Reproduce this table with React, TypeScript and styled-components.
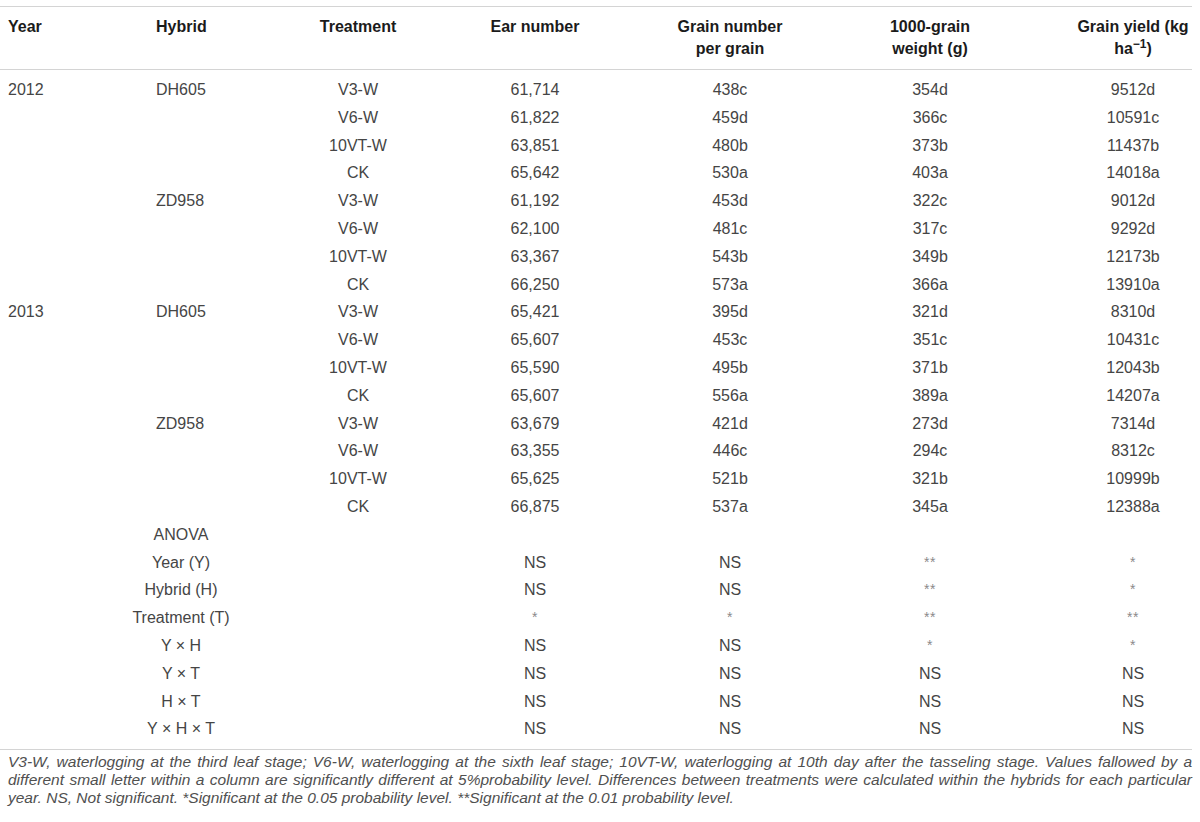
import React from 'react';
import styled, { createGlobalStyle } from 'styled-components';

const Global = createGlobalStyle`
  html, body { margin: 0; padding: 0; background: #ffffff; }
  body { font-family: "Liberation Sans", Arial, Helvetica, sans-serif; }
`;

const COLS = '156px 164px 76px 278px 112px 288px 118px';
const RULE = '#d4d4d4';

const Page = styled.div`
  width: 1192px;
  padding-top: 6px;
`;

const Head = styled.div`
  display: grid;
  grid-template-columns: ${COLS};
  align-items: start;
  border-top: 1px solid ${RULE};
  border-bottom: 1px solid ${RULE};
  padding: 9px 0 10px;
  font-size: 16px;
  font-weight: 700;
  line-height: 21.5px;
  color: #1b1b1b;
`;

const HeadCell = styled.div<{ $start?: boolean; $inset?: number }>`
  display: flex;
  flex-direction: column;
  align-items: ${(p) => (p.$start ? 'flex-start' : 'center')};
  padding-left: ${(p) => p.$inset ?? 0}px;
  white-space: nowrap;
`;

const Sup = styled.sup`
  font-size: 12px;
  line-height: 0;
  vertical-align: 6px;
`;

const Body = styled.div`
  padding: 6px 0;
  border-bottom: 1px solid ${RULE};
  font-size: 16px;
  line-height: 27.8px;
  color: #454545;
`;

const Row = styled.div`
  display: grid;
  grid-template-columns: ${COLS};
  height: 27.8px;
`;

const Cell = styled.div<{ $start?: boolean; $inset?: number }>`
  display: flex;
  justify-content: ${(p) => (p.$start ? 'flex-start' : 'center')};
  padding-left: ${(p) => p.$inset ?? 0}px;
  white-space: nowrap;
`;

const AnovaLabel = styled.span`
  width: 50px;
  display: flex;
  justify-content: center;
  white-space: nowrap;
`;

const Star = styled.span`
  color: #8a8a8a;
  font-size: 14px;
  letter-spacing: 0.5px;
`;

const Note = styled.div`
  padding: 3px 0 0 8px;
  font-size: 15.5px;
  font-style: italic;
  line-height: 18px;
  color: #505050;
`;

const NoteLine = styled.span<{ $last?: boolean }>`
  display: block;
  text-align: justify;
  text-align-last: ${(p) => (p.$last ? 'left' : 'justify')};
  white-space: nowrap;
`;

type DataRow = {
  year?: string;
  hybrid?: string;
  treatment: string;
  values: string[];
};

const data: DataRow[] = [
  { year: '2012', hybrid: 'DH605', treatment: 'V3-W', values: ['61,714', '438c', '354d', '9512d'] },
  { treatment: 'V6-W', values: ['61,822', '459d', '366c', '10591c'] },
  { treatment: '10VT-W', values: ['63,851', '480b', '373b', '11437b'] },
  { treatment: 'CK', values: ['65,642', '530a', '403a', '14018a'] },
  { hybrid: 'ZD958', treatment: 'V3-W', values: ['61,192', '453d', '322c', '9012d'] },
  { treatment: 'V6-W', values: ['62,100', '481c', '317c', '9292d'] },
  { treatment: '10VT-W', values: ['63,367', '543b', '349b', '12173b'] },
  { treatment: 'CK', values: ['66,250', '573a', '366a', '13910a'] },
  { year: '2013', hybrid: 'DH605', treatment: 'V3-W', values: ['65,421', '395d', '321d', '8310d'] },
  { treatment: 'V6-W', values: ['65,607', '453c', '351c', '10431c'] },
  { treatment: '10VT-W', values: ['65,590', '495b', '371b', '12043b'] },
  { treatment: 'CK', values: ['65,607', '556a', '389a', '14207a'] },
  { hybrid: 'ZD958', treatment: 'V3-W', values: ['63,679', '421d', '273d', '7314d'] },
  { treatment: 'V6-W', values: ['63,355', '446c', '294c', '8312c'] },
  { treatment: '10VT-W', values: ['65,625', '521b', '321b', '10999b'] },
  { treatment: 'CK', values: ['66,875', '537a', '345a', '12388a'] },
];

const anova: { label: string; values: string[] }[] = [
  { label: 'ANOVA', values: ['', '', '', ''] },
  { label: 'Year (Y)', values: ['NS', 'NS', '**', '*'] },
  { label: 'Hybrid (H)', values: ['NS', 'NS', '**', '*'] },
  { label: 'Treatment (T)', values: ['*', '*', '**', '**'] },
  { label: 'Y × H', values: ['NS', 'NS', '*', '*'] },
  { label: 'Y × T', values: ['NS', 'NS', 'NS', 'NS'] },
  { label: 'H × T', values: ['NS', 'NS', 'NS', 'NS'] },
  { label: 'Y × H × T', values: ['NS', 'NS', 'NS', 'NS'] },
];

const Value = ({ v }: { v: string }) =>
  v.startsWith('*') ? <Star>{v}</Star> : <>{v}</>;

export default function App() {
  return (
    <Page>
      <Global />
      <Head>
        <HeadCell $start $inset={8}>Year</HeadCell>
        <HeadCell $start>Hybrid</HeadCell>
        <HeadCell>Treatment</HeadCell>
        <HeadCell>Ear number</HeadCell>
        <HeadCell>
          <span>Grain number</span>
          <span>per grain</span>
        </HeadCell>
        <HeadCell>
          <span>1000-grain</span>
          <span>weight (g)</span>
        </HeadCell>
        <HeadCell>
          <span>Grain yield (kg</span>
          <span>
            ha<Sup>−1</Sup>)
          </span>
        </HeadCell>
      </Head>
      <Body>
        {data.map((r, i) => (
          <Row key={i}>
            <Cell $start $inset={8}>{r.year ?? ''}</Cell>
            <Cell $start>{r.hybrid ?? ''}</Cell>
            <Cell>{r.treatment}</Cell>
            {r.values.map((v, j) => (
              <Cell key={j}>{v}</Cell>
            ))}
          </Row>
        ))}
        {anova.map((r, i) => (
          <Row key={`a${i}`}>
            <Cell />
            <Cell $start>
              <AnovaLabel>{r.label}</AnovaLabel>
            </Cell>
            <Cell />
            {r.values.map((v, j) => (
              <Cell key={j}>
                <Value v={v} />
              </Cell>
            ))}
          </Row>
        ))}
      </Body>
      <Note>
        <NoteLine>
          V3-W, waterlogging at the third leaf stage; V6-W, waterlogging at the sixth leaf stage; 10VT-W, waterlogging at 10th day after the tasseling stage. Values fallowed by a
        </NoteLine>
        <NoteLine>
          different small letter within a column are significantly different at 5%probability level. Differences between treatments were calculated within the hybrids for each particular
        </NoteLine>
        <NoteLine $last>
          year. NS, Not significant. *Significant at the 0.05 probability level. **Significant at the 0.01 probability level.
        </NoteLine>
      </Note>
    </Page>
  );
}
